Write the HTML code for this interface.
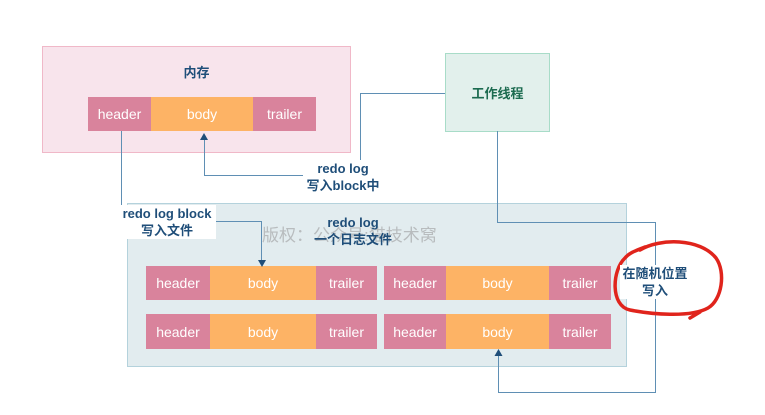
<!DOCTYPE html><html><head><meta charset="utf-8"><style>
body{margin:0;width:765px;height:415px;background:#fff;position:relative;overflow:hidden;font-family:"Liberation Sans","Noto Sans CJK SC",sans-serif}
div{position:absolute;box-sizing:border-box}
.c{display:flex;align-items:center;justify-content:center;color:#fff;font-size:14px}
.h{background:#d9839c}.b{background:#fdb365}
.t{color:#1f4e79;font-size:13px;font-weight:bold;text-align:center;background:#fff;line-height:17px}
</style></head><body>
<div style="left:42px;top:46px;width:309px;height:107px;background:#f8e4ec;border:1px solid #f0b8c8"></div>
<div style="left:42px;top:62px;width:309px;text-align:center;font-size:13px;font-weight:bold;color:#1f4e79">内存</div>
<div style="left:445px;top:53px;width:105px;height:79px;background:#e2f0ec;border:1px solid #a8dcc8"></div>
<div class="c" style="left:445px;top:53px;width:105px;height:79px;color:#1c6b50;font-weight:bold;font-size:13px">工作线程</div>
<div style="left:127px;top:203px;width:500px;height:164px;background:#e2ecef;border:1px solid #b4d2dc"></div>
<div style="left:262px;top:221px;color:#b8bcbe;font-size:17px">版权：公众号:猫技术窝</div>

<div class="c h" style="left:88px;top:97px;width:63px;height:34px">header</div>
<div class="c b" style="left:151px;top:97px;width:102px;height:34px">body</div>
<div class="c h" style="left:253px;top:97px;width:63px;height:34px">trailer</div>

<div class="c h" style="left:146px;top:266px;width:64px;height:34px">header</div>
<div class="c b" style="left:210px;top:266px;width:106px;height:34px">body</div>
<div class="c h" style="left:316px;top:266px;width:61px;height:34px">trailer</div>
<div class="c h" style="left:384px;top:266px;width:62px;height:34px">header</div>
<div class="c b" style="left:446px;top:266px;width:103px;height:34px">body</div>
<div class="c h" style="left:549px;top:266px;width:62px;height:34px">trailer</div>
<div class="c h" style="left:146px;top:314px;width:64px;height:35px">header</div>
<div class="c b" style="left:210px;top:314px;width:106px;height:35px">body</div>
<div class="c h" style="left:316px;top:314px;width:61px;height:35px">trailer</div>
<div class="c h" style="left:384px;top:314px;width:62px;height:35px">header</div>
<div class="c b" style="left:446px;top:314px;width:103px;height:35px">body</div>
<div class="c h" style="left:549px;top:314px;width:62px;height:35px">trailer</div>

<svg width="765" height="415" style="position:absolute;left:0;top:0">
<g fill="none" stroke="#5f8fb4" stroke-width="1">
<path d="M121.5 131V221.5H261.5V262"/>
<path d="M445 93.5H360.5V175.5H204.5V138"/>
<path d="M497.5 131V222.5H655.5V392.5H498.5V355"/>
</g>
<g fill="#1f4e79"><path d="M204 133l-4 7h8z"/><path d="M262 267l-4-7h8z"/><path d="M498.5 349l-4 7h8z"/></g>
<path d="M640 250C660 238 700 238 716 258C726 272 722 300 708 308C690 318 650 314 630 310C610 306 612 270 625 258C630 252 638 250 645 247M700 312L690 318" fill="none" stroke="#e0241c" stroke-width="3.5" stroke-linecap="round"/>
</svg>
<div class="t" style="left:303px;top:160px;width:80px;background:#fff">redo log<br>写入block中</div>
<div class="t" style="left:118px;top:205px;width:98px;background:#fff">redo log block<br>写入文件</div>
<div class="t" style="left:310px;top:214px;width:86px;background:transparent">redo log<br>一个日志文件</div>
<div class="t" style="left:620px;top:265px;width:70px;background:#fff">在随机位置<br>写入</div>
</body></html>
